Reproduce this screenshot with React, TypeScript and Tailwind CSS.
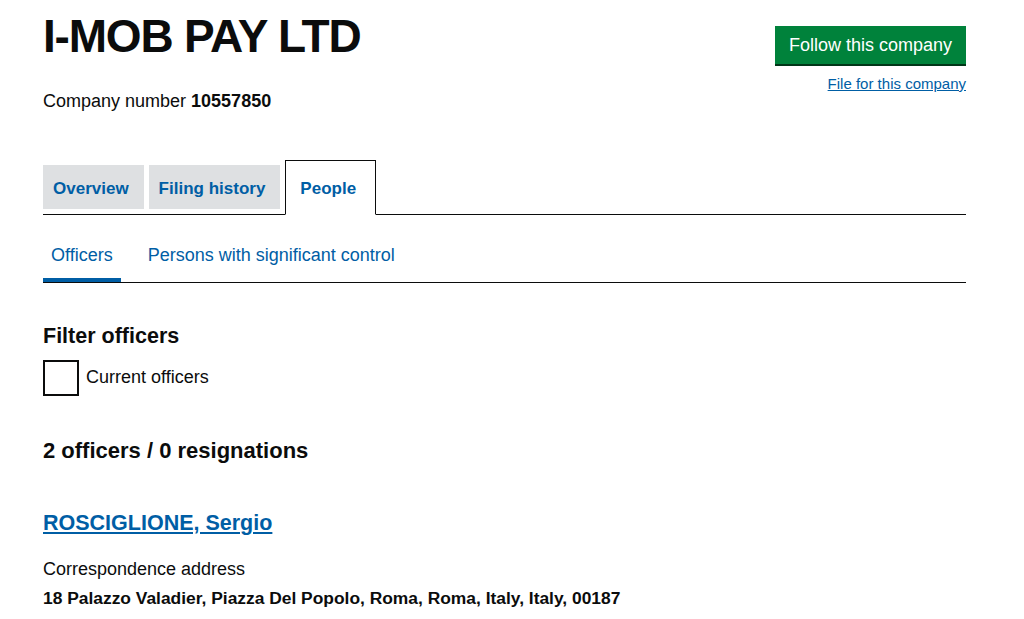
import React from "react";

export default function App() {
  return (
    <div className="min-h-[619px] w-full bg-white font-['Liberation_Sans',Arial,sans-serif] text-[#0b0c0c]">
      <div className="mx-[43px] w-[923px]">
        {/* header */}
        <header className="flex justify-between">
          <div>
            <h1 className="pt-[11px] text-[46px] leading-[50px] font-bold tracking-[-1.2px]">I-MOB PAY LTD</h1>
            <p className="mt-[30px] text-[18px] leading-[20px]">
              Company number <strong>10557850</strong>
            </p>
          </div>
          <div className="flex flex-col items-end pt-[26px]">
            <button className="h-[38px] bg-[#00823b] px-[14px] text-[18px] text-white shadow-[0_2px_0_#003618]">
              Follow this company
            </button>
            <a href="#" className="mt-[11px] text-[15px] leading-[18px] text-[#005ea5] underline">
              File for this company
            </a>
          </div>
        </header>

        {/* tabs */}
        <nav className="mt-[49px] flex items-end gap-[5px] border-b border-[#0b0c0c]">
          <a href="#" className="mb-[5px] flex h-[44px] items-center bg-[#dee0e2] pt-[3px] pr-[15px] pl-[10px] text-[17px] font-bold text-[#005ea5]">
            Overview
          </a>
          <a href="#" className="mb-[5px] flex h-[44px] items-center bg-[#dee0e2] pt-[3px] pr-[15px] pl-[10px] text-[17px] font-bold text-[#005ea5]">
            Filing history
          </a>
          <a href="#" className="-mb-px flex h-[55px] items-center border border-[#0b0c0c] border-b-white bg-white pt-[2px] pr-[19px] pl-[14px] text-[17px] font-bold text-[#005ea5]">
            People
          </a>
        </nav>

        {/* sub tabs */}
        <div className="mt-[29px] flex border-b border-[#0b0c0c] text-[18px] leading-[22px] text-[#005ea5]">
          <a href="#" className="border-b-[4px] border-[#005ea5] px-[8px] pb-[12px]">Officers</a>
          <a href="#" className="ml-[27px] pb-[12px]">Persons with significant control</a>
        </div>

        {/* filter */}
        <h2 className="mt-[41px] text-[21.5px] leading-[24px] font-bold">Filter officers</h2>
        <label className="mt-[12px] flex items-center gap-[7px]">
          <span className="block h-[36px] w-[36px] border-2 border-[#0b0c0c]" />
          <span className="-mt-[2px] text-[18px]">Current officers</span>
        </label>

        <h2 className="mt-[43px] text-[22px] leading-[24px] font-bold">2 officers / 0 resignations</h2>

        <h2 className="mt-[48px] text-[21.5px] leading-[24px] font-bold">
          <a href="#" className="text-[#005ea5] underline">ROSCIGLIONE, Sergio</a>
        </h2>
        <p className="mt-[24px] text-[18px] leading-[20px]">Correspondence address</p>
        <p className="mt-[9px] text-[17.4px] leading-[20px] font-bold">
          18 Palazzo Valadier, Piazza Del Popolo, Roma, Roma, Italy, Italy, 00187
        </p>
      </div>
    </div>
  );
}
